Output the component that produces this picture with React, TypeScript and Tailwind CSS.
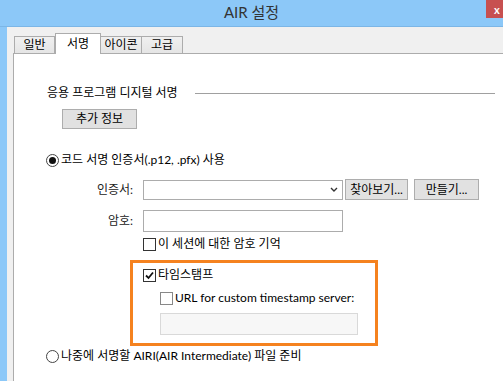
import React from "react";

const font = { fontFamily: 'Lato, "Noto Sans CJK KR", "Noto Sans", sans-serif' };

function Radio({ checked }: { checked?: boolean }) {
  return (
    <span className="w-[13px] h-[13px] rounded-full border border-[#444] bg-white flex items-center justify-center shrink-0">
      {checked && <span className="w-[7px] h-[7px] rounded-full bg-[#111]" />}
    </span>
  );
}

function Check({ checked, disabled }: { checked?: boolean; disabled?: boolean }) {
  return (
    <span
      className={
        "w-[13px] h-[13px] border bg-white flex items-center justify-center shrink-0 " +
        (disabled ? "border-[#888]" : "border-[#333]")
      }
    >
      {checked && (
        <svg width="9" height="9" viewBox="0 0 9 9">
          <path d="M1 4.5 L3.5 7 L8 1.5" fill="none" stroke="#111" strokeWidth="1.8" />
        </svg>
      )}
    </span>
  );
}

function Tab({ label, selected, w }: { label: string; selected?: boolean; w: string }) {
  if (selected) {
    return (
      <div className={`${w} h-[21px] -mb-px z-10 bg-white border border-b-0 border-[#acacac] flex items-start justify-center pt-[1px] text-[12px]`}>
        {label}
      </div>
    );
  }
  return (
    <div className={`${w} h-[17px] bg-gradient-to-b from-[#f0f0f0] to-[#e5e5e5] border border-b-0 border-[#acacac] flex items-center justify-center text-[12px] -ml-px`}>
      {label}
    </div>
  );
}

export default function App() {
  return (
    <div className="w-[503px] h-[381px] overflow-hidden bg-[#8cc8f8] flex flex-col text-black" style={font}>
      <div className="h-[27px] relative flex items-center justify-center shrink-0 border-b border-[#7cb6e6]">
        <span className="text-[15px] text-[#333] -mt-[1px]">AIR 설정</span>
        <div className="absolute right-0 top-0 w-[17px] h-[18px] bg-[#c75050] flex items-center justify-start pl-[8px] text-white text-[11px] font-bold leading-none">
          x
        </div>
      </div>
      <div className="flex-1 flex pl-[7px]">
        <div className="flex-1 bg-[#f0f0f0] pl-[6px] pt-[6px] flex flex-col">
          <div className="h-[20px] flex items-end pl-[2px]">
            <Tab label="일반" w="w-[41px]" />
            <Tab label="서명" w="w-[46px]" selected />
            <Tab label="아이콘" w="w-[42px]" />
            <Tab label="고급" w="w-[42px]" />
          </div>
          <div className="flex-1 bg-white border-l border-t border-[#acacac] pl-[33px] text-[12px]">
            <div className="mt-[31px] h-[16px] flex items-center">
              <span>응용 프로그램 디지털 서명</span>
              <div className="ml-[17px] w-[300px] h-px bg-[#a0a0a0]" />
            </div>
            <div className="mt-[8px] ml-[15px] w-[75px] h-[20px] bg-[#e1e1e1] border border-[#adadad] flex items-center justify-center">
              추가 정보
            </div>
            <div className="mt-[23px] h-[16px] flex items-center gap-[2px] -ml-[1px]">
              <Radio checked />
              <span>코드 서명 인증서(.p12, .pfx) 사용</span>
            </div>
            <div className="mt-[11px] flex items-center">
              <span className="w-[86px] text-right text-[#222]">인증서:</span>
              <div className="ml-[10px] w-[200px] h-[20px] border border-[#acacac] bg-white flex items-center justify-end pr-[4px]">
                <svg width="8" height="6" viewBox="0 0 8 6">
                  <path d="M1 1 L4 4 L7 1" fill="none" stroke="#333" strokeWidth="1.4" />
                </svg>
              </div>
              <div className="ml-[2px] w-[63px] h-[21px] bg-[#e1e1e1] border border-[#adadad] flex items-center justify-center">
                찾아보기...
              </div>
              <div className="ml-[6px] w-[65px] h-[21px] bg-[#e1e1e1] border border-[#adadad] flex items-center justify-center">
                만들기...
              </div>
            </div>
            <div className="mt-[10px] flex items-center">
              <span className="w-[86px] text-right text-[#222]">암호:</span>
              <div className="ml-[10px] w-[200px] h-[22px] border border-[#acacac] bg-white" />
            </div>
            <div className="mt-[5px] h-[14px] flex items-center gap-[2px] ml-[96px]">
              <Check />
              <span>이 세션에 대한 암호 기억</span>
            </div>
            <div className="mt-[9px] ml-[83px] w-[248px] border-[3px] border-[#f5821f] pl-[10px] pt-[5px] pb-[8px]">
              <div className="h-[14px] flex items-center gap-[2px]">
                <Check checked />
                <span>타임스탬프</span>
              </div>
              <div className="mt-[9px] ml-[17px] h-[14px] flex items-center gap-[2px]">
                <Check disabled />
                <span>URL for custom timestamp server:</span>
              </div>
              <div className="mt-[8px] ml-[17px] w-[198px] h-[22px] border border-[#d9d9d9] bg-[#f7f7f7]" />
            </div>
            <div className="mt-[3px] h-[14px] flex items-center gap-[2px] -ml-[1px]">
              <Radio />
              <span>나중에 서명할 AIRI(AIR Intermediate) 파일 준비</span>
            </div>
          </div>
        </div>
      </div>
    </div>
  );
}
